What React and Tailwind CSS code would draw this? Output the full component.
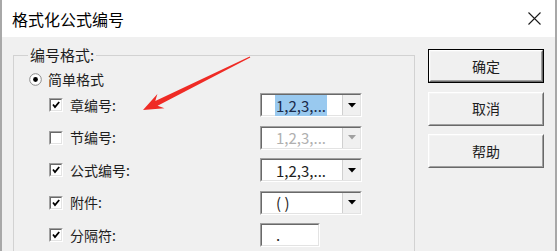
// 格式化公式编号 dialog (classic Windows look)
import React from "react";

const FONT = '"Noto Sans CJK SC", "Microsoft YaHei", sans-serif';

function Sunken({ children, className = "" }) {
  return (
    <div className={`border border-t-[#a0a0a0] border-l-[#a0a0a0] border-r-white border-b-white ${className}`}>
      <div className="h-full w-full border border-t-[#696969] border-l-[#696969] border-r-[#e3e3e3] border-b-[#e3e3e3] bg-white">
        {children}
      </div>
    </div>
  );
}

function CheckBox({ checked }) {
  return (
    <Sunken className="w-[14px] h-[14px] shrink-0">
      {checked && (
        <svg width="10" height="10" viewBox="0 0 10 10" className="block">
          <path d="M2 4.5 L4 7 L8.2 2" fill="none" stroke="#000" strokeWidth="1.8" />
        </svg>
      )}
    </Sunken>
  );
}

function Radio() {
  return (
    <svg width="13" height="13" viewBox="0 0 13 13" className="shrink-0">
      <circle cx="6.5" cy="6.5" r="5.8" fill="#fff" stroke="#8a8a8a" strokeWidth="1" />
      <circle cx="6.5" cy="6.5" r="2.4" fill="#000" />
    </svg>
  );
}

function Combo({ value, disabled, selected }) {
  const textCls = selected
    ? "bg-[#99c9ef] text-[#1b2b4b]"
    : disabled
    ? "text-[#b0b0b0]"
    : "text-[#1e1e1e]";
  return (
    <Sunken className="w-[102px] h-[24px] shrink-0">
      <div className="flex h-full items-center">
        <div className="flex-1 pl-[13px] text-[15px] leading-[15px]">
          <span className={`px-[1px] ${textCls}`}>{value}</span>
        </div>
        <div className="h-full w-[18px] border-l border-[#d0d0d0] bg-[#f0f0f0] flex items-center justify-center">
          <svg width="8" height="5" viewBox="0 0 8 5">
            <path d="M0 0H8L4 4.5Z" fill={disabled ? "#a0a0a0" : "#000"} />
          </svg>
        </div>
      </div>
    </Sunken>
  );
}

function Btn({ children, def }) {
  return (
    <div className={`w-[116px] h-[34px] ${def ? "border border-black" : ""}`}>
      <div className="h-full border border-t-white border-l-white border-r-[#696969] border-b-[#696969]">
        <div className="h-full border border-t-[#f4f4f4] border-l-[#f4f4f4] border-r-[#a0a0a0] border-b-[#a0a0a0] bg-[#f0f0f0] flex items-center justify-center text-[14px] text-[#1e1e1e]">
          {children}
        </div>
      </div>
    </div>
  );
}

const ROWS = [
  { label: "章编号:", checked: true, combo: { value: "1,2,3,...", selected: true } },
  { label: "节编号:", checked: false, combo: { value: "1,2,3,...", disabled: true } },
  { label: "公式编号:", checked: true, combo: { value: "1,2,3,..." } },
  { label: "附件:", checked: true, combo: { value: "( )" } },
  { label: "分隔符:", checked: true, text: "." },
];

function Arrow() {
  const T = [250, 57];
  const P = [143, 110];
  const dx = P[0] - T[0];
  const dy = P[1] - T[1];
  const L = Math.hypot(dx, dy);
  const u = [dx / L, dy / L];
  const n = [-u[1], u[0]];
  const pt = (base, back, side) => [
    base[0] - u[0] * back + n[0] * side,
    base[1] - u[1] * back + n[1] * side,
  ];
  const pts = [
    pt(T, 0, 0.6),
    pt(P, 15, 2.6),
    pt(P, 20, 8),
    P,
    pt(P, 20, -8),
    pt(P, 15, -2.6),
    pt(T, 0, -0.6),
  ];
  return (
    <svg width="559" height="251" className="absolute left-0 top-0 pointer-events-none">
      <polygon points={pts.map((p) => p.join(",")).join(" ")} fill="#ef2b25" />
    </svg>
  );
}

export default function App() {
  return (
    <div className="relative w-[559px] h-[251px] overflow-hidden bg-white" style={{ fontFamily: FONT }}>
      <div className="w-[557px] h-full border-l-2 border-r-2 border-[#a8a8a8] flex flex-col">
        {/* Title bar */}
        <div className="h-[37px] shrink-0 bg-white flex items-center justify-between pl-[10px] pr-[14px]">
          <span className="text-[16px] text-black">格式化公式编号</span>
          <svg width="13" height="13" viewBox="0 0 13 13">
            <path d="M0.5 0.5L12.5 12.5M12.5 0.5L0.5 12.5" stroke="#1a1a1a" strokeWidth="1.1" />
          </svg>
        </div>

        {/* Body */}
        <div className="flex-1 bg-[#f0f0f0] flex pl-[11px]">
          <fieldset className="mt-[8px] w-[402px] h-[230px] shrink-0 border border-[#d2d2d2]">
            <legend className="ml-[14px] px-[2px] text-[15px] leading-[20px] text-[#1e1e1e]">编号格式:</legend>
            <div className="flex items-center gap-[6px] pl-[15px] mt-[4px] h-[20px]">
              <Radio />
              <span className="text-[14px] text-[#1e1e1e]">简单格式</span>
            </div>
            <div className="flex flex-col gap-[8px] mt-[4px]">
              {ROWS.map((r) => (
                <div key={r.label} className="flex items-center h-[24.5px] pl-[35px]">
                  <CheckBox checked={r.checked} />
                  <span className="ml-[7px] w-[190px] text-[14px] text-[#1e1e1e]">{r.label}</span>
                  {r.combo ? (
                    <Combo {...r.combo} />
                  ) : (
                    <Sunken className="w-[60px] h-[24px] shrink-0">
                      <div className="pl-[14px] text-[15px] leading-[20px] text-[#1e1e1e]">{r.text}</div>
                    </Sunken>
                  )}
                </div>
              ))}
            </div>
          </fieldset>

          <div className="ml-[13px] mt-[12px] flex flex-col gap-[8.5px]">
            <Btn def>确定</Btn>
            <Btn>取消</Btn>
            <Btn>帮助</Btn>
          </div>
        </div>
      </div>
      <Arrow />
    </div>
  );
}
